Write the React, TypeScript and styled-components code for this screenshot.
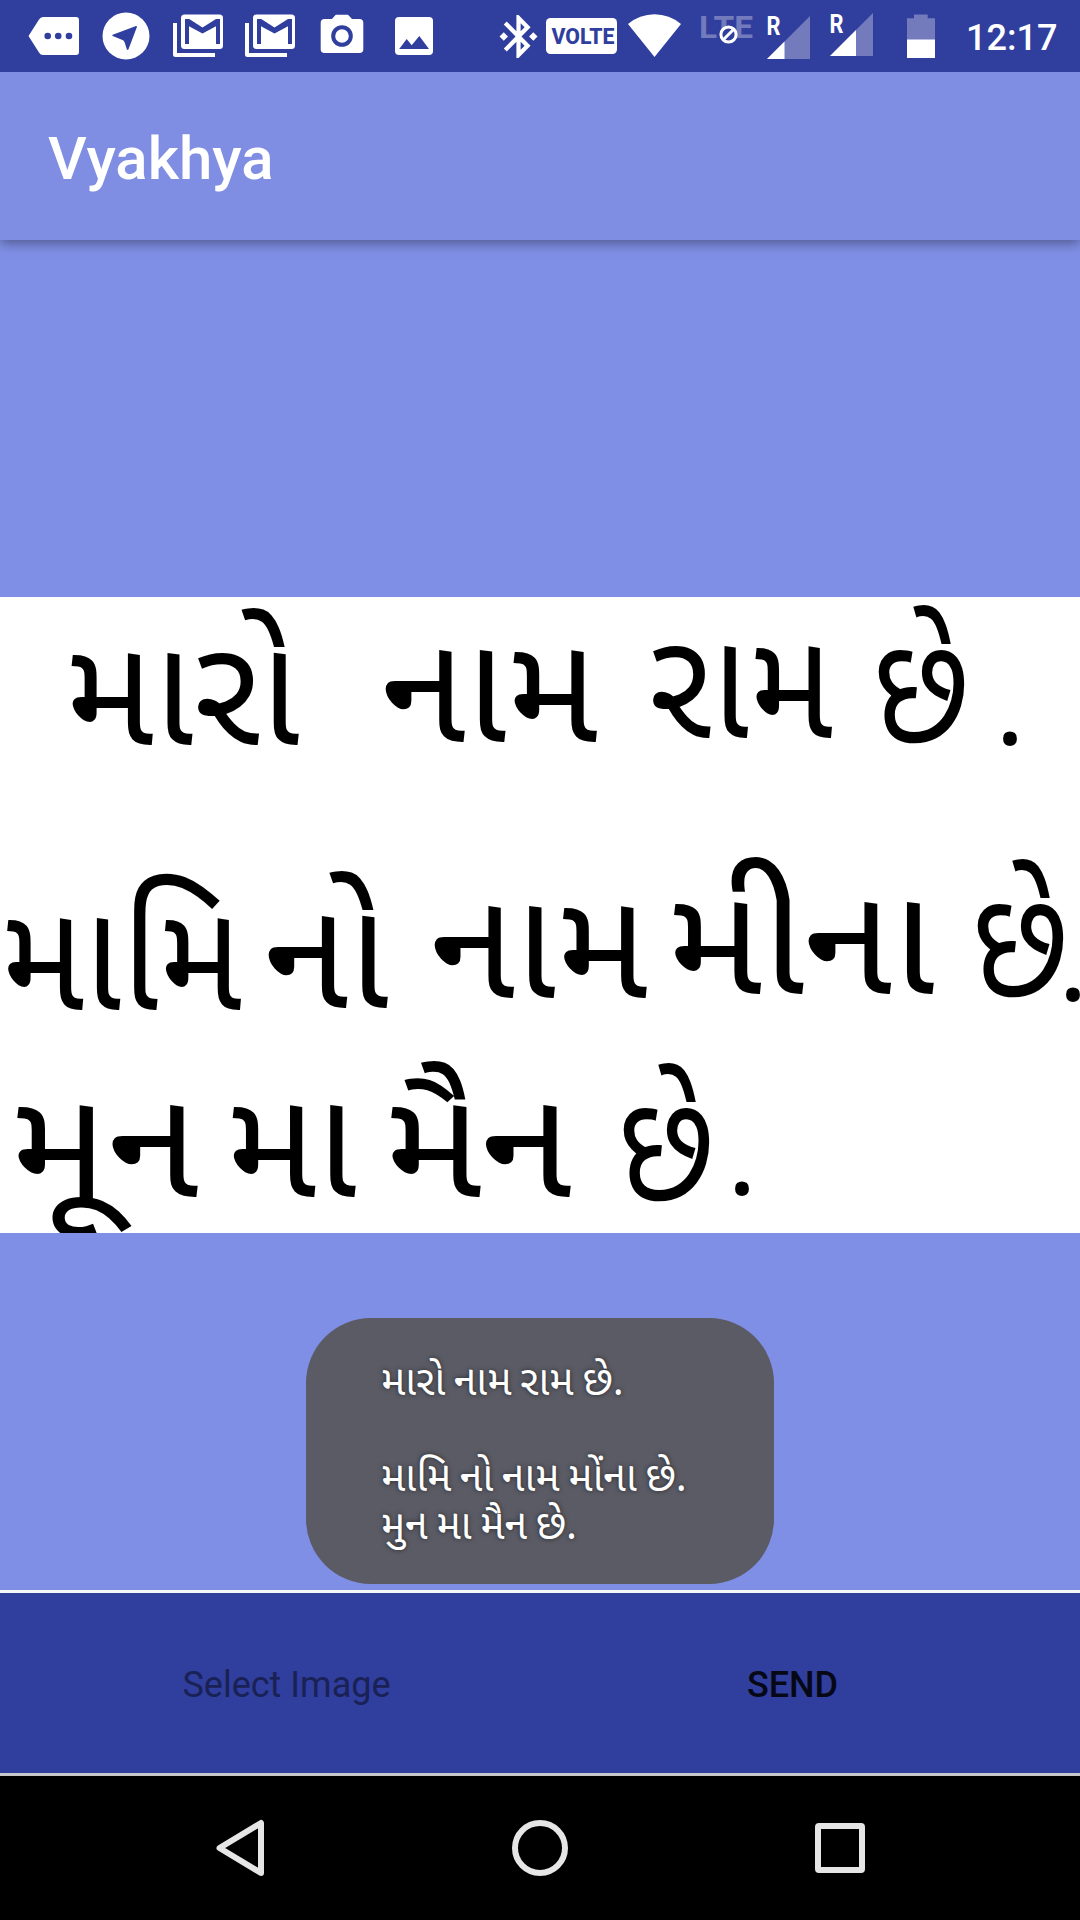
import React from "react";
import styled, { createGlobalStyle } from "styled-components";

const INDIGO = "#303e9e";
const FADED = "#737bbd";

const GlobalStyle = createGlobalStyle`
  html, body { margin: 0; padding: 0; }
  body { background: #808fe6; font-family: Roboto, "Noto Sans", sans-serif; }
`;

const Screen = styled.div`
  display: flex;
  flex-direction: column;
  width: 1080px;
  height: 1920px;
  overflow: hidden;
  background: #808fe6;
`;

const StatusBar = styled.header`
  display: flex;
  justify-content: space-between;
  flex: none;
  position: relative;
  z-index: 2;
  height: 72px;
  padding: 0 24px 0 18px;
  box-sizing: border-box;
  background: ${INDIGO};
  color: #fff;
`;

const IconGroup = styled.div`
  display: flex;
`;

const Glyph = styled.svg<{ $w: number }>`
  display: block;
  flex: none;
  width: ${(p) => p.$w}px;
  height: 72px;
  fill: #fff;
`;

const Label = styled.text<{ $size: number; $color?: string; $weight?: number }>`
  font-family: Roboto, sans-serif;
  font-weight: ${(p) => p.$weight ?? 700};
  font-size: ${(p) => p.$size}px;
  fill: ${(p) => p.$color ?? "#fff"};
`;

const Clock = styled.time`
  width: 90px;
  padding-right: 2px;
  box-sizing: border-box;
  text-align: right;
  font-size: 36px;
  font-weight: 500;
  line-height: 76px;
  white-space: nowrap;
`;

const AppBar = styled.div`
  display: flex;
  align-items: center;
  flex: none;
  position: relative;
  height: 168px;
  padding: 6px 48px 0;
  box-sizing: border-box;
  background: #7f8ee2;
  box-shadow: 0 3px 12px rgba(0, 0, 0, 0.4);
`;

const Title = styled.h1`
  margin: 0;
  color: #fff;
  font-size: 60px;
  font-weight: 500;
  line-height: 70px;
`;

const Content = styled.main`
  display: flex;
  flex-direction: column;
  flex: none;
  height: 1350px;
  padding-top: 357px;
  box-sizing: border-box;
`;

const Photo = styled.svg`
  display: block;
  flex: none;
  width: 1080px;
  height: 636px;
  background: #fff;
`;

const Word = styled.text<{ $small?: boolean }>`
  font-family: "Noto Sans Gujarati", "Noto Sans", sans-serif;
  font-size: ${(p) => (p.$small ? 108 : 152)}px;
  font-weight: 400;
  fill: #000;
`;

const Toast = styled.div`
  align-self: center;
  margin-top: 85px;
  width: 468px;
  height: 266px;
  padding: 43px 75px 0;
  box-sizing: border-box;
  border-radius: 65px;
  background: #5b5b65;
  color: #fff;
  font-family: "Noto Sans Gujarati", "Noto Sans", sans-serif;
  font-size: 41px;
  line-height: 48px;
  white-space: pre;
  word-spacing: -2px;
  text-shadow: 0 0 5px rgba(0, 0, 0, 0.6);
`;

const Actions = styled.div`
  display: grid;
  grid-template-columns: 1fr 1fr;
  flex: none;
  height: 186px;
  box-sizing: border-box;
  border-top: 3px solid #f6f6f7;
  border-bottom: 3px solid #c8c8ca;
`;

const Action = styled.button<{ $strong?: boolean }>`
  border: 0;
  padding: ${(p) => (p.$strong ? "4px 35px 0 0" : "4px 0 0 33px")};
  background: ${INDIGO};
  color: ${(p) => (p.$strong ? "#060815" : "#192155")};
  font-family: Roboto, sans-serif;
  font-size: 36px;
  font-weight: ${(p) => (p.$strong ? 500 : 400)};
`;

const NavBar = styled.nav`
  display: flex;
  justify-content: center;
  align-items: center;
  gap: 228px;
  flex: none;
  height: 144px;
  background: #000;
`;

const NavIcon = styled.svg`
  width: 72px;
  height: 72px;
  fill: none;
  stroke: #e6e6e6;
  stroke-width: 6px;
  stroke-linejoin: round;
`;

const GmailStack = () => (
  <Glyph $w={72} viewBox="0 0 72 72">
    <path d="M11 23h4v30h38v4H13.500q-2.500 0-2.500-2.500z" />
    <rect x="19" y="14.500" width="42" height="34.500" rx="3.500" />
    <path fill={INDIGO} d="M23 44V19h4.200l13.300 8.600L54 19h4v25h-4V26.300L40.500 33.500 27 26.300V44z" />
  </Glyph>
);

const WORDS: [string, number, number, number][] = [
  ["મારો", 65, 235, 148],
  ["નામ", 382, 216, 145],
  ["રામ", 649, 184, 141],
  ["છે", 873, 96, 145],
  [".", 995, 30, 147],
  ["મામિ", 1, 241, 413],
  ["નો", 265, 124, 411],
  ["નામ", 431, 217, 401],
  ["મીના", 667, 268, 397],
  ["છે", 972, 96, 399],
  [".", 1058, 30, 403],
  ["મૂન", 10, 189, 600],
  ["મા", 226, 131, 600],
  ["મૈન", 384, 188, 600],
  ["છે", 618, 96, 603],
  [".", 727, 30, 597],
];

export default function App() {
  return (
    <Screen>
      <GlobalStyle />
      <StatusBar>
        <IconGroup>
          <Glyph $w={72} viewBox="0 0 72 72">
            <path d="M10.500 36 21 19.500Q22.500 17 25 17H58q3 0 3 3V52q0 3-3 3H25q-2.500 0-4-2.500z" />
            <g fill={INDIGO}>
              <circle cx="29.700" cy="36" r="3.300" />
              <circle cx="40.200" cy="36" r="3.300" />
              <circle cx="51" cy="36" r="3.300" />
            </g>
          </Glyph>
          <Glyph $w={72} viewBox="0 0 72 72">
            <circle cx="36" cy="36" r="23.500" />
            <path fill={INDIGO} d="M22.700 34.800 46 26q1.200-.2.900 1L38.500 49.300q-.8 1.400-1.700 0L34.500 42q-.6-1.500-2-2L22.700 36q-1-.6 0-1.200z" />
          </Glyph>
          <GmailStack />
          <GmailStack />
          <Glyph $w={72} viewBox="0 0 72 72">
            <path d="M26 19 29.700 14.800H42L46 19h7.500q3.800 0 3.800 3.800V49.200q0 3.800-3.800 3.800H18.500q-3.800 0-3.800-3.800V22.800q0-3.800 3.800-3.800z" />
            <circle cx="36" cy="36" r="8.800" stroke={INDIGO} strokeWidth="4" />
          </Glyph>
          <Glyph $w={72} viewBox="0 0 72 72">
            <rect x="17" y="17" width="38" height="38" rx="4" />
            <path fill={INDIGO} d="M21.200 49 28.700 39l5 6.300L41.300 36 51 49z" />
          </Glyph>
        </IconGroup>
        <IconGroup>
          <Glyph $w={48} viewBox="496 0 48 72">
            <path
              transform="translate(493.200 10.700) scale(2.110 2.150)"
              d="M7 12l-2-2-2 2 2 2 2-2zm10.710-4.290L12 2h-1v7.590L6.410 5 5 6.410 10.590 12 5 17.590 6.410 19 11 14.410V22h1l5.710-5.710-4.300-4.290 4.300-4.290zM13 5.830l1.880 1.880L13 9.590V5.830zm1.880 10.460L13 18.170v-3.760l1.880 1.880zM19 10l-2 2 2 2 2-2-2-2z"
            />
          </Glyph>
          <Glyph $w={76} viewBox="544 0 76 72">
            <rect x="546" y="18" width="71" height="36" rx="4.500" />
            <Label $size={21.5} $color={INDIGO} $weight={800} x="551.500" y="43.500" textLength="63" lengthAdjust="spacingAndGlyphs">VOLTE</Label>
          </Glyph>
          <Glyph $w={70} viewBox="620 0 70 72">
            <path d="M628 24A41 41 0 0 1 681 24L654.500 57z" />
          </Glyph>
          <Glyph $w={70} viewBox="690 0 70 72">
            <Label $size={32} $color={FADED} x="699" y="38" textLength="54" lengthAdjust="spacingAndGlyphs">LTE</Label>
            <circle cx="728.500" cy="34.500" r="7.600" fill={INDIGO} stroke="#fff" strokeWidth="3" />
            <path d="M723.500 39.500 733.500 29.500" stroke="#fff" strokeWidth="3" />
          </Glyph>
          <Glyph $w={60} viewBox="760 0 60 72">
            <path fill={FADED} d="M810 16V59H767z" />
            <path d="M784.500 41.500V59H767z" />
            <Label $size={25} x="766.500" y="35.300" textLength="14" lengthAdjust="spacingAndGlyphs">R</Label>
          </Glyph>
          <Glyph $w={70} viewBox="820 0 70 72">
            <path fill={FADED} d="M873 13V56H830z" />
            <path d="M856 30V56H830z" />
            <Label $size={25} x="829.500" y="32.500" textLength="14" lengthAdjust="spacingAndGlyphs">R</Label>
          </Glyph>
          <Glyph $w={76} viewBox="890 0 76 72">
            <path fill={FADED} d="M914 14.500h13.700V18.300H935V40H907V18.300H914z" />
            <path d="M907 39.500H935V58H907z" />
          </Glyph>
          <Clock>12:17</Clock>
        </IconGroup>
      </StatusBar>
      <AppBar>
        <Title>Vyakhya</Title>
      </AppBar>
      <Content>
        <Photo viewBox="0 0 1080 636">
          {WORDS.map(([word, x, w, y]) => (
            <Word key={x} $small={word === "."} x={x} y={y} textLength={w} lengthAdjust="spacingAndGlyphs">
              {word}
            </Word>
          ))}
        </Photo>
        <Toast>{"મારો નામ રામ છે.\n\nમામિ નો નામ મોંના છે.\nમુન મા મૈન છે."}</Toast>
      </Content>
      <Actions>
        <Action>Select Image</Action>
        <Action $strong>SEND</Action>
      </Actions>
      <NavBar>
        <NavIcon viewBox="0 0 72 72">
          <path d="M57 11V61L15.500 36z" />
        </NavIcon>
        <NavIcon viewBox="0 0 72 72">
          <circle cx="36" cy="36" r="25" />
        </NavIcon>
        <NavIcon viewBox="0 0 72 72">
          <rect x="14" y="14" width="44" height="44" rx="1" />
        </NavIcon>
      </NavBar>
    </Screen>
  );
}
